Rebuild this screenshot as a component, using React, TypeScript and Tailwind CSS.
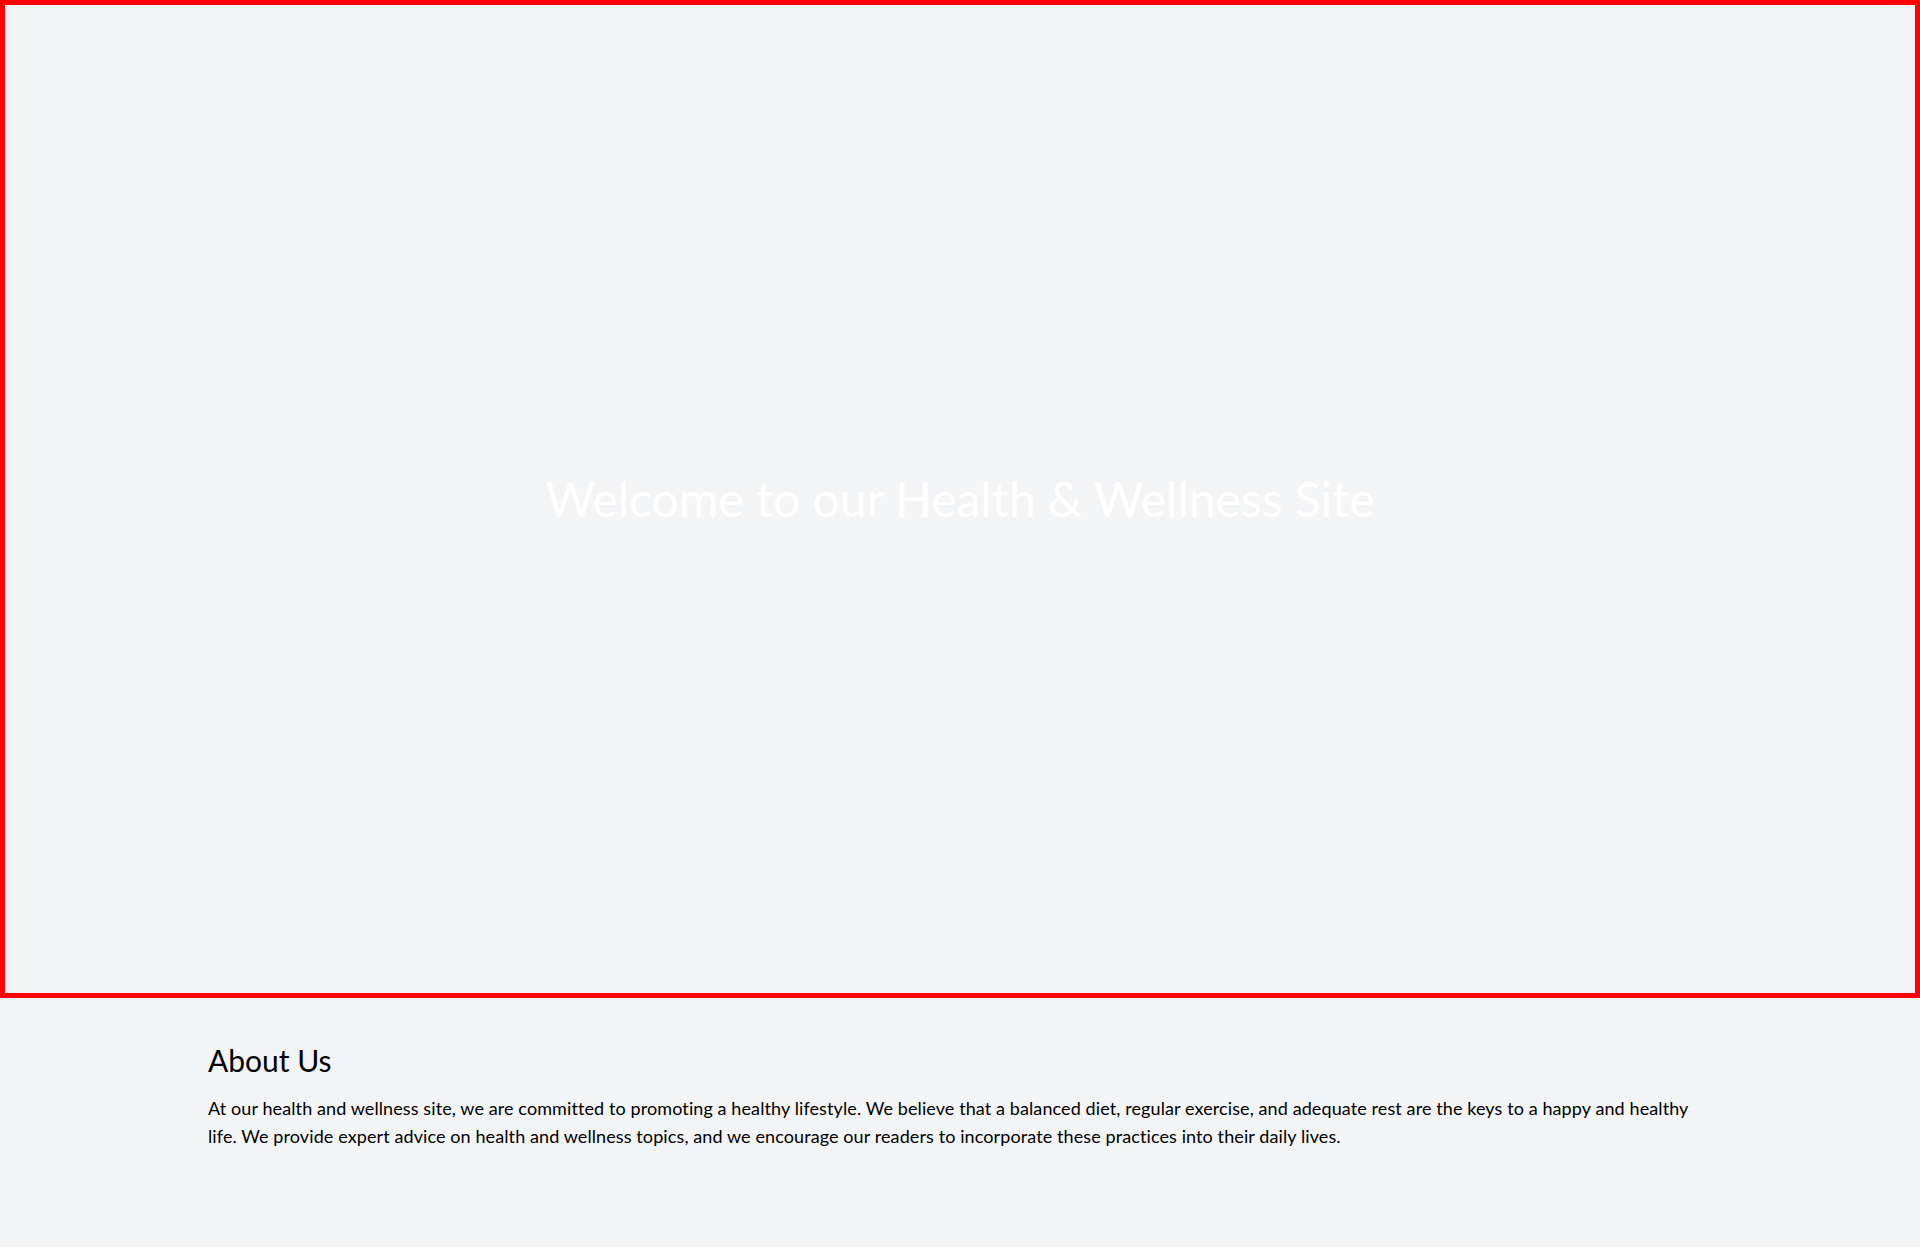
export default function App() {
  return (
    <div className="min-h-screen bg-gray-100" style={{ fontFamily: 'Lato, "Open Sans", sans-serif' }}>
      <section className="h-[80vh] border-[5px] border-[#ff0000] flex items-center justify-center">
        <h1 className="text-5xl text-white">Welcome to our Health &amp; Wellness Site</h1>
      </section>
      <section className="px-[208px] pt-11 pb-12">
        <h2 className="text-3xl text-black mb-4">About Us</h2>
        <p className="text-lg text-black tracking-[0.1px]">
          At our health and wellness site, we are committed to promoting a healthy lifestyle. We believe that a balanced diet, regular exercise, and adequate rest are the keys to a happy and healthy life. We provide expert advice on health and wellness topics, and we encourage our readers to incorporate these practices into their daily lives.
        </p>
      </section>
    </div>
  );
}
